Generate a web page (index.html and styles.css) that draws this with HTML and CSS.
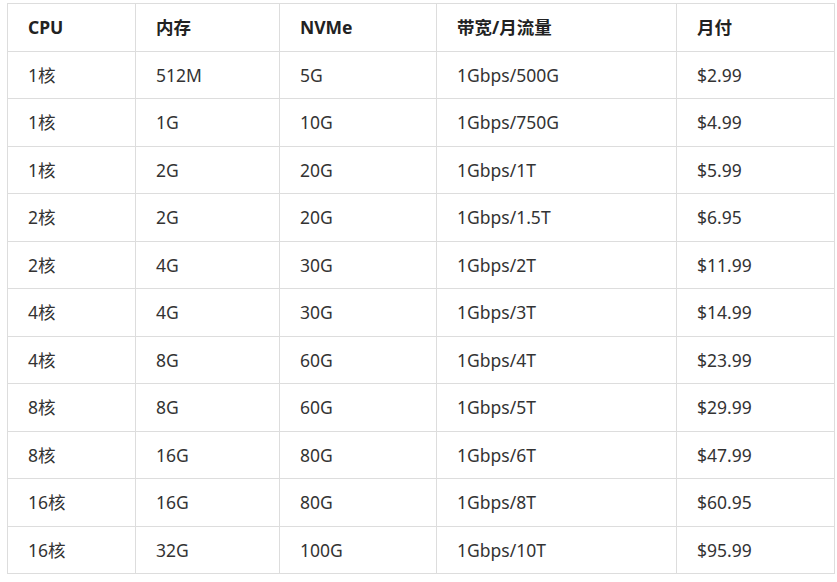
FILE: index.html
```html
<!DOCTYPE html>
<html lang="zh-CN">
<head>
<meta charset="utf-8">
<title>VPS</title>
<link rel="stylesheet" href="styles.css">
</head>
<body>
<table class="plans">
  <colgroup>
    <col class="c1"><col class="c2"><col class="c3"><col class="c4"><col class="c5">
  </colgroup>
  <thead>
    <tr><th>CPU</th><th>内存</th><th>NVMe</th><th>带宽/月流量</th><th>月付</th></tr>
  </thead>
  <tbody>
    <tr><td>1核</td><td>512M</td><td>5G</td><td>1Gbps/500G</td><td>$2.99</td></tr>
    <tr><td>1核</td><td>1G</td><td>10G</td><td>1Gbps/750G</td><td>$4.99</td></tr>
    <tr><td>1核</td><td>2G</td><td>20G</td><td>1Gbps/1T</td><td>$5.99</td></tr>
    <tr><td>2核</td><td>2G</td><td>20G</td><td>1Gbps/1.5T</td><td>$6.95</td></tr>
    <tr><td>2核</td><td>4G</td><td>30G</td><td>1Gbps/2T</td><td>$11.99</td></tr>
    <tr><td>4核</td><td>4G</td><td>30G</td><td>1Gbps/3T</td><td>$14.99</td></tr>
    <tr><td>4核</td><td>8G</td><td>60G</td><td>1Gbps/4T</td><td>$23.99</td></tr>
    <tr><td>8核</td><td>8G</td><td>60G</td><td>1Gbps/5T</td><td>$29.99</td></tr>
    <tr><td>8核</td><td>16G</td><td>80G</td><td>1Gbps/6T</td><td>$47.99</td></tr>
    <tr><td>16核</td><td>16G</td><td>80G</td><td>1Gbps/8T</td><td>$60.95</td></tr>
    <tr><td>16核</td><td>32G</td><td>100G</td><td>1Gbps/10T</td><td>$95.99</td></tr>
  </tbody>
</table>
</body>
</html>
```
FILE: styles.css
```css
html, body {
  margin: 0;
  background: #fff;
}
body {
  padding: 3px 0 0 7px;
  font-family: "Noto Sans", "Noto Sans CJK SC", sans-serif;
  font-size: 17.5px;
  color: #333;
}
.plans {
  border-collapse: collapse;
  table-layout: fixed;
  width: 827px;
}
.c1 { width: 128px; }
.c2 { width: 144px; }
.c3 { width: 157px; }
.c4 { width: 240px; }
.c5 { width: 158px; }
.plans th,
.plans td {
  border: 1px solid #dddddd;
  padding: 0 20px;
  height: 46.5px;
  text-align: left;
  vertical-align: middle;
  white-space: nowrap;
  line-height: 24px;
}
.plans th {
  font-weight: 700;
  color: #222;
}
.plans td {
  font-weight: 400;
}
```
